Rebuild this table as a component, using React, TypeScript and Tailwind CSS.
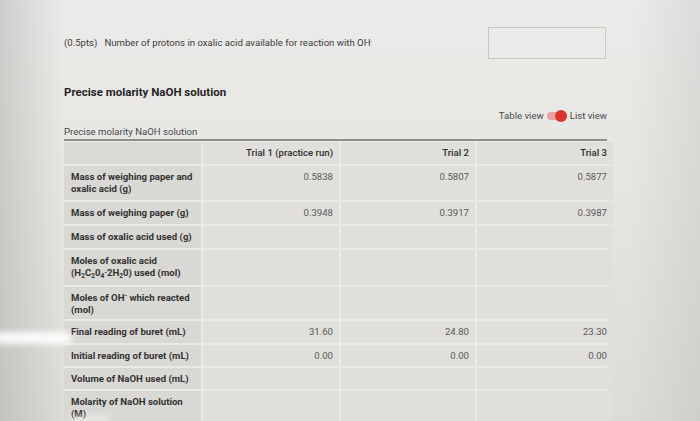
import React from "react";

const sub = "text-[6.5px] leading-none";

const rows: { label: React.ReactNode; v: [string, string, string]; h: string }[] = [
  { label: <>Mass of weighing paper and<br />oxalic acid (g)</>, v: ["0.5838", "0.5807", "0.5877"], h: "h-[34px]" },
  { label: "Mass of weighing paper (g)", v: ["0.3948", "0.3917", "0.3987"], h: "h-[22px]" },
  { label: "Mass of oxalic acid used (g)", v: ["", "", ""], h: "h-[22px]" },
  {
    label: (
      <>
        Moles of oxalic acid
        <br />
        (H<sub className={sub}>2</sub>C<sub className={sub}>2</sub>0<sub className={sub}>4</sub>·2H<sub className={sub}>2</sub>0) used (mol)
      </>
    ),
    v: ["", "", ""],
    h: "h-[35px]",
  },
  { label: <>Moles of OH<sup className={sub}>-</sup> which reacted<br />(mol)</>, v: ["", "", ""], h: "h-[32px]" },
  { label: "Final reading of buret (mL)", v: ["31.60", "24.80", "23.30"], h: "h-[22px]" },
  { label: "Initial reading of buret (mL)", v: ["0.00", "0.00", "0.00"], h: "h-[21px]" },
  { label: "Volume of NaOH used (mL)", v: ["", "", ""], h: "h-[21px]" },
  { label: <>Molarity of NaOH solution<br />(M)</>, v: ["", "", ""], h: "h-[34px]" },
];

export default function App() {
  return (
    <div
      className="relative w-[700px] h-[421px] overflow-hidden bg-[linear-gradient(90deg,rgba(150,150,148,0.35)_0%,rgba(150,150,148,0)_9%,rgba(150,150,148,0)_90%,rgba(150,150,148,0.18)_100%),linear-gradient(180deg,#ecebe9_0%,#e6e5e2_45%,#dcdbd7_100%)]"
      style={{ fontFamily: "Roboto, 'Liberation Sans', sans-serif" }}
    >
      <div className="ml-[64px] w-[543px] pt-[27px]">
        {/* question row */}
        <div className="flex items-center justify-between h-[32px]">
          <div className="text-[9.6px] text-[#3c3c3c] flex items-center gap-[7px]">
            <span>(0.5pts)</span>
            <span>
              Number of protons in oxalic acid available for reaction with OH<sup className="text-[5px]">-</sup>
            </span>
          </div>
          <div className="w-[118px] h-[32px] border border-[#c9c8c5] bg-[#eaeae8] mr-[1px]" />
        </div>

        <div className="mt-[26px] text-[11.5px] font-bold text-[#262626] leading-[14px]">
          Precise molarity NaOH solution
        </div>

        <div className="mt-[10px] flex justify-end items-center gap-[3px] text-[9.6px] text-[#4a4a4a] h-[14px]">
          <span>Table view</span>
          <span className="relative w-[20px] h-[12px] flex items-center">
            <span className="w-[18px] h-[8px] rounded-full bg-[#e8a3a0]" />
            <span className="absolute right-0 w-[12px] h-[12px] rounded-full bg-[#d8342c]" />
          </span>
          <span>List view</span>
        </div>

        <div className="mt-[3px] text-[9.6px] text-[#4a4a4a] leading-[12px]">Precise molarity NaOH solution</div>

        <div className="mt-[1px] border-t-2 border-[#8e8e8c]">
          <div className="grid grid-cols-[137px_136px_134px_136px] gap-[2px] bg-[#eae9e6] pt-[1px] text-[9.6px] leading-[12px]">
            <div className="h-[22px] bg-[#dad9d5]" />
            <div className="h-[22px] bg-[#e0dfdb] px-[6px] py-[5px] text-right font-medium text-[#2e2e2e]">Trial 1 (practice run)</div>
            <div className="h-[22px] bg-[#e0dfdb] px-[6px] py-[5px] text-right font-medium text-[#2e2e2e]">Trial 2</div>
            <div className="h-[22px] bg-[#e0dfdb] px-[6px] py-[5px] text-right font-medium text-[#2e2e2e]">Trial 3</div>
            {rows.map((r, i) => (
              <React.Fragment key={i}>
                <div className={`${r.h} bg-[#d9d8d4] px-[7px] py-[5px] font-bold text-[#333] whitespace-nowrap`}>{r.label}</div>
                {r.v.map((v, j) => (
                  <div key={j} className={`${r.h} bg-[#e0dfdb] px-[6px] py-[5px] text-right text-[#5a5a5a]`}>
                    {v}
                  </div>
                ))}
              </React.Fragment>
            ))}
          </div>
        </div>
      </div>

      {/* glare from photo */}
      <div className="absolute left-[-6px] top-[332px] w-[78px] h-[12px] rounded-full bg-white/90 blur-[3px]" />
      <div className="absolute left-[70px] top-[416px] w-[40px] h-[5px] rounded-full bg-white/60 blur-[3px]" />
    </div>
  );
}
